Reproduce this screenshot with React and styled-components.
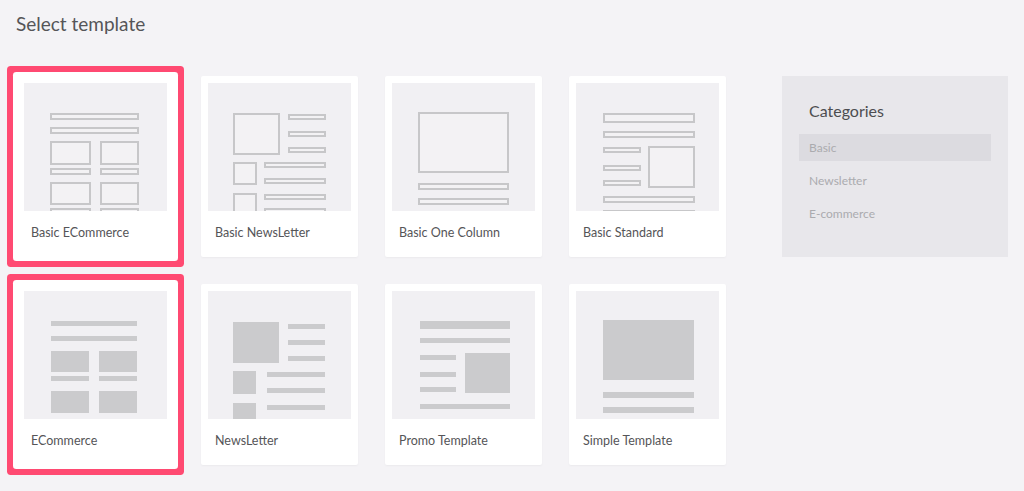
import styled, { createGlobalStyle, css } from "styled-components";

const GlobalStyle = createGlobalStyle`
  html, body {
    margin: 0;
    padding: 0;
    background: #f4f3f6;
  }
  body {
    font-family: Lato, "Open Sans", sans-serif;
    color: #555;
  }
`;

const Page = styled.div`
  padding: 12px 16px;
  min-height: 467px;
`;

const Title = styled.h1`
  margin: 0;
  font-size: 19px;
  line-height: 24px;
  font-weight: 400;
  color: #555558;
`;

const Content = styled.div`
  display: flex;
  align-items: flex-start;
  margin-top: 40px;
  padding-left: 1px;
`;

const Grid = styled.div`
  display: grid;
  grid-template-columns: repeat(4, 157px);
  column-gap: 27px;
  row-gap: 27px;
`;

const Card = styled.div`
  background: #fff;
  padding: 7px 7px 0;
  border-radius: 2px;
  box-shadow: 0 1px 2px rgba(0, 0, 0, 0.04);
  cursor: pointer;

  ${({ $selected }) =>
    $selected &&
    css`
      box-shadow: 0 0 0 4px #fff, 0 0 0 10px #ff4a72;
      border-radius: 1px;
    `}
`;

const Thumb = styled.svg`
  display: block;
  width: 143px;
  height: 128px;
  background: #f1f0f3;
`;

const Label = styled.div`
  height: 43px;
  padding: 0 0 3px 7px;
  display: flex;
  align-items: center;
  font-size: 12.5px;
  color: #555558;
`;

const Sidebar = styled.aside`
  width: 227px;
  height: 181px;
  box-sizing: border-box;
  margin-left: 56px;
  padding: 25px 17px 0;
  background: #e8e7eb;
`;

const SideTitle = styled.h2`
  margin: 0 0 13px 10px;
  font-size: 16px;
  line-height: 20px;
  font-weight: 400;
  color: #4d4d50;
`;

const CatList = styled.ul`
  list-style: none;
  margin: 0;
  padding: 0;
  display: flex;
  flex-direction: column;
  gap: 6px;
`;

const CatItem = styled.li`
  height: 27px;
  display: flex;
  align-items: center;
  padding-left: 10px;
  font-size: 12px;
  color: #ababaf;
  background: ${({ $active }) => ($active ? "#dcdbe0" : "transparent")};
`;

// [x, y, w, h] blocks inside a 143x128 thumbnail
const templates = [
  {
    name: "Basic ECommerce",
    selected: true,
    kind: "outline",
    blocks: [
      [26, 30, 89, 7], [26, 44, 89, 7],
      [26, 58, 41, 24], [76, 58, 39, 24],
      [26, 85, 41, 7], [76, 85, 39, 7],
      [26, 99, 41, 23], [76, 99, 39, 23],
      [26, 125, 41, 7], [76, 125, 39, 7],
    ],
  },
  {
    name: "Basic NewsLetter",
    kind: "outline",
    blocks: [
      [25, 30, 47, 42],
      [80, 31, 38, 6], [80, 48, 38, 6], [80, 64, 38, 6],
      [25, 79, 24, 23],
      [56, 79, 62, 6], [56, 95, 62, 6],
      [25, 110, 24, 23],
      [56, 111, 62, 6], [56, 125, 62, 6],
    ],
  },
  {
    name: "Basic One Column",
    kind: "outline",
    blocks: [
      [26, 29, 91, 61],
      [26, 100, 91, 7], [26, 115, 91, 7],
    ],
  },
  {
    name: "Basic Standard",
    kind: "outline",
    blocks: [
      [27, 30, 92, 10], [27, 48, 92, 7],
      [27, 64, 38, 6], [27, 82, 38, 6], [27, 97, 38, 6],
      [72, 63, 47, 42],
      [27, 113, 92, 7], [27, 127, 92, 7],
    ],
  },
  {
    name: "ECommerce",
    selected: true,
    kind: "fill",
    blocks: [
      [27, 30, 86, 5], [27, 45, 86, 5],
      [27, 60, 38, 21], [75, 60, 38, 21],
      [27, 85, 38, 5], [75, 85, 38, 5],
      [27, 100, 38, 22], [75, 100, 38, 22],
    ],
  },
  {
    name: "NewsLetter",
    kind: "fill",
    blocks: [
      [25, 31, 46, 41],
      [80, 33, 37, 5], [80, 49, 37, 5], [80, 65, 37, 5],
      [25, 80, 23, 23],
      [59, 81, 58, 5], [59, 97, 58, 5], [59, 114, 58, 5],
      [25, 112, 23, 20],
    ],
  },
  {
    name: "Promo Template",
    kind: "fill",
    blocks: [
      [28, 30, 90, 8], [28, 47, 90, 5],
      [28, 64, 36, 5], [28, 81, 36, 5], [28, 96, 36, 5],
      [73, 62, 45, 40],
      [28, 113, 90, 5],
    ],
  },
  {
    name: "Simple Template",
    kind: "fill",
    blocks: [
      [27, 29, 91, 60],
      [27, 101, 91, 6], [27, 116, 91, 6],
    ],
  },
];

function TemplateThumb({ kind, blocks }) {
  return (
    <Thumb viewBox="0 0 143 128">
      {blocks.map(([x, y, w, h], i) =>
        kind === "outline" ? (
          <rect
            key={i}
            x={x + 1}
            y={y + 1}
            width={w - 2}
            height={h - 2}
            fill="#f3f2f4"
            stroke="#c7c7c9"
            strokeWidth="2"
          />
        ) : (
          <rect key={i} x={x} y={y} width={w} height={h} fill="#cbcbcd" />
        )
      )}
    </Thumb>
  );
}

export default function App() {
  return (
    <>
      <GlobalStyle />
      <Page>
        <Title>Select template</Title>
        <Content>
          <Grid>
            {templates.map((t) => (
              <Card key={t.name} $selected={t.selected}>
                <TemplateThumb kind={t.kind} blocks={t.blocks} />
                <Label>{t.name}</Label>
              </Card>
            ))}
          </Grid>
          <Sidebar>
            <SideTitle>Categories</SideTitle>
            <CatList>
              <CatItem $active>Basic</CatItem>
              <CatItem>Newsletter</CatItem>
              <CatItem>E-commerce</CatItem>
            </CatList>
          </Sidebar>
        </Content>
      </Page>
    </>
  );
}
